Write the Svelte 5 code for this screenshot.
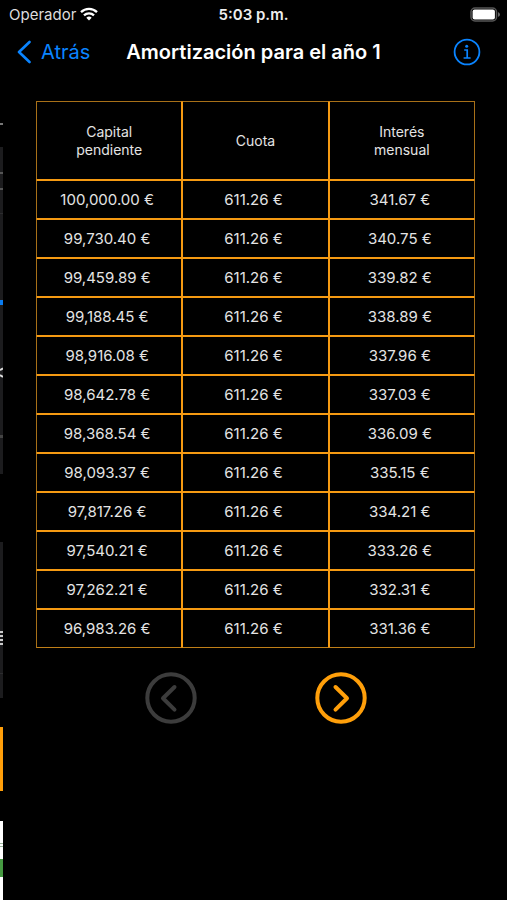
<script lang="ts">
	const monthlyPayment = 611.26;

	const rows = [
		{ capital: 100000, interest: 341.67 },
		{ capital: 99730.4, interest: 340.75 },
		{ capital: 99459.89, interest: 339.82 },
		{ capital: 99188.45, interest: 338.89 },
		{ capital: 98916.08, interest: 337.96 },
		{ capital: 98642.78, interest: 337.03 },
		{ capital: 98368.54, interest: 336.09 },
		{ capital: 98093.37, interest: 335.15 },
		{ capital: 97817.26, interest: 334.21 },
		{ capital: 97540.21, interest: 333.26 },
		{ capital: 97262.21, interest: 332.31 },
		{ capital: 96983.26, interest: 331.36 }
	];

	const year = 1;

	function euros(value: number) {
		return (
			value.toLocaleString('en-US', { minimumFractionDigits: 2, maximumFractionDigits: 2 }) + ' €'
		);
	}
</script>

<div class="screen">
	<!-- edge of the previous view in the navigation stack -->
	<svg class="peek" width="3" height="900" viewBox="0 0 3 900" aria-hidden="true">
		<rect y="123" width="3" height="2" fill="#777" />
		<rect y="147" width="3" height="327" fill="#1c1c1e" />
		<rect y="172" width="3" height="2" fill="#555" />
		<rect y="188" width="3" height="2" fill="#555" />
		<rect y="213" width="3" height="1" fill="#2c2c2e" />
		<rect y="300" width="3" height="5" fill="#0a7cf0" />
		<path d="M3 368.500 L0 370 M0 375 L3 377" stroke="#ddd" stroke-width="2" />
		<rect y="435" width="3" height="3" fill="#444" />
		<rect y="542" width="3" height="156" fill="#1c1c1e" />
		<path d="M0 632h3M0 636h3M0 640h3M0 644h3" stroke="#ccc" stroke-width="2" />
		<rect y="673" width="3" height="1" fill="#2c2c2e" />
		<rect y="727" width="3" height="64" fill="#ff9f0a" />
		<rect y="821" width="3" height="79" fill="#fff" />
		<path d="M0 843.500h3M0 846.500h3" stroke="#9ab59a" />
		<rect y="859" width="3" height="18" fill="#469a42" />
	</svg>

	<div class="status">
		<div class="carrier">
			<span>Operador</span>
			<svg width="18" height="14" viewBox="0 0 18 14" aria-hidden="true">
				<g fill="none" stroke="#fff" stroke-width="2.300">
					<path d="M1 5.200a11.500 11.500 0 0 1 16 0" />
					<path d="M4 8.300a7.200 7.200 0 0 1 10 0" />
				</g>
				<path d="M6.300 10.700a4 4 0 0 1 5.400 0L9 13.500z" fill="#fff" />
			</svg>
		</div>
		<span class="time">5:03 p.m.</span>
		<svg class="battery" width="31" height="15" viewBox="0 0 31 15" aria-hidden="true">
			<rect x="1" y="1" width="25.500" height="13" rx="4" fill="none" stroke="#555" stroke-width="1.500" />
			<rect x="2.600" y="2.600" width="22.300" height="9.800" rx="2" fill="#fff" />
			<path d="M28 5.200v4.600c1.200-.4 2-1.200 2-2.300s-.8-1.900-2-2.300z" fill="#666" />
		</svg>
	</div>

	<header class="navbar">
		<button class="back" type="button">
			<svg width="14" height="24" viewBox="0 0 14 24" aria-hidden="true">
				<path
					d="M12.500 2L2 12l10.500 10"
					fill="none"
					stroke="currentColor"
					stroke-width="2.600"
					stroke-linecap="round"
					stroke-linejoin="round"
				/>
			</svg>
			Atrás
		</button>
		<h1>Amortización para el año {year}</h1>
		<button class="info" type="button" aria-label="Información">
			<svg width="28" height="28" viewBox="0 0 28 28" aria-hidden="true">
				<circle cx="14" cy="14" r="12.400" fill="none" stroke="currentColor" stroke-width="1.800" />
				<circle cx="13.700" cy="8.200" r="1.500" fill="currentColor" />
				<path d="M11.200 12h3v7.800M10.600 20h7" fill="none" stroke="currentColor" stroke-width="1.700" />
			</svg>
		</button>
	</header>

	<main>
		<table>
			<thead>
				<tr>
					<th scope="col">Capital<br />pendiente</th>
					<th scope="col">Cuota</th>
					<th scope="col">Interés<br />mensual</th>
				</tr>
			</thead>
			<tbody>
				{#each rows as row}
					<tr>
						<td>{euros(row.capital)}</td>
						<td>{euros(monthlyPayment)}</td>
						<td>{euros(row.interest)}</td>
					</tr>
				{/each}
			</tbody>
		</table>

		<div class="pager">
			<button type="button" aria-label="Año anterior" disabled={year === 1}>
				<svg width="52" height="52" viewBox="0 0 52 52" aria-hidden="true">
					<circle cx="26" cy="26" r="23.700" />
					<path d="M29.500 15L18 26.300l11.500 11.300" />
				</svg>
			</button>
			<button type="button" aria-label="Año siguiente">
				<svg width="52" height="52" viewBox="0 0 52 52" aria-hidden="true">
					<circle cx="26" cy="26" r="23.700" />
					<path d="M20.500 15L32 26.300l-11.500 11.300" />
				</svg>
			</button>
		</div>
	</main>
</div>

<style>
	:global(body) {
		margin: 0;
		background: #000;
	}

	.screen {
		position: relative;
		box-sizing: border-box;
		min-height: 100vh;
		overflow: hidden;
		background: #000;
		color: #fff;
		font-family: Inter, Roboto, sans-serif;
	}

	.peek {
		position: absolute;
		top: 0;
		left: 0;
	}

	.status {
		display: grid;
		grid-template-columns: 1fr auto 1fr;
		align-items: center;
		height: 28px;
		padding: 0 6px;
		font-size: 15px;
	}

	.carrier {
		display: flex;
		align-items: center;
		gap: 4px;
		padding-left: 3px;
		color: #ddd;
	}

	.time {
		font-weight: 600;
		color: #eee;
	}

	.battery {
		justify-self: end;
	}

	.navbar {
		display: grid;
		grid-template-columns: 1fr auto 1fr;
		align-items: center;
		height: 48px;
		padding: 0 17px;
	}

	button {
		display: flex;
		align-items: center;
		padding: 0;
		border: 0;
		background: none;
		color: #0a84ff;
		font: inherit;
	}

	.back {
		justify-self: start;
		gap: 10px;
		font-size: 20px;
	}

	.info {
		justify-self: end;
		padding-right: 9px;
	}

	h1 {
		margin: 0;
		font-size: 20px;
		font-weight: 600;
	}

	main {
		padding: 25px 32px 24px 36px;
	}

	table {
		width: 100%;
		table-layout: fixed;
		border-collapse: separate;
		border-spacing: 0;
		color: #e4e4e4;
		font-size: 15px;
		line-height: 18px;
		text-align: center;
	}

	th,
	td {
		box-sizing: border-box;
		height: 39px;
		padding: 0 4px 0 0;
		border: 1px solid #f59a12;
	}

	th {
		height: 79px;
		padding: 0;
		font-size: 14px;
		font-weight: 400;
	}

	tr > :first-child {
		border-left-color: #a87018;
	}

	tr > :last-child {
		border-right-color: #a87018;
	}

	thead th {
		border-top-color: #a87018;
	}

	tbody tr:last-child td {
		border-bottom-color: #c07f18;
	}

	.pager {
		display: flex;
		justify-content: center;
		gap: 118px;
		padding-top: 24px;
	}

	.pager button {
		color: #ff9f0a;
	}

	.pager button:disabled {
		color: #3c3c3c;
	}

	.pager svg {
		fill: none;
		stroke: currentColor;
		stroke-width: 4;
		stroke-linecap: round;
		stroke-linejoin: round;
	}
</style>
